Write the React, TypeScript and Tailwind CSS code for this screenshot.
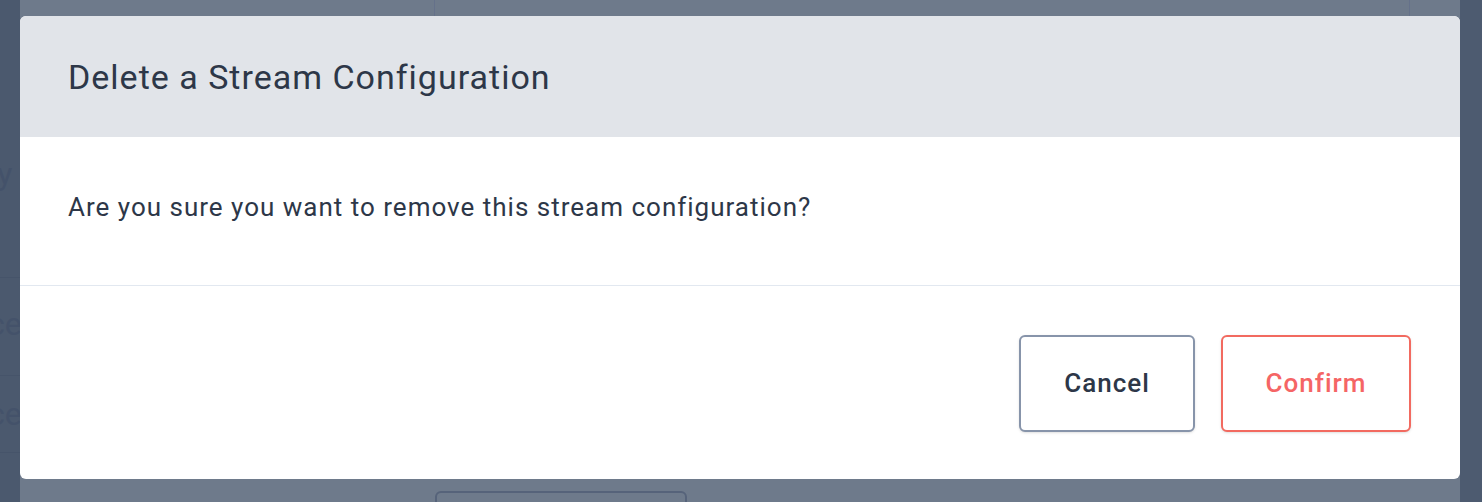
export default function App() {
  return (
    <div className="relative w-[1482px] h-[502px] overflow-hidden flex bg-[#4b596e] font-['Roboto',sans-serif]">
      {/* page underneath the overlay */}
      <div className="w-[20px] h-full relative bg-[#4b596e] overflow-hidden">
        <span className="absolute left-[-14px] top-[150px] text-[32px] text-[#44526a]">ry</span>
        <div className="absolute left-0 top-[277px] w-[20px] h-px bg-[#46546a]" />
        <span className="absolute left-[-12px] top-[300px] text-[32px] text-[#44526a]">ce</span>
        <div className="absolute left-0 top-[375px] w-[20px] h-px bg-[#46546a]" />
        <span className="absolute left-[-12px] top-[390px] text-[32px] text-[#44526a]">ce</span>
        <div className="absolute left-0 top-[452px] w-[20px] h-px bg-[#46546a]" />
      </div>
      <div className="relative flex-1 h-full bg-[#6e7a8b] flex flex-col">
        <div className="absolute left-[414px] top-0 h-[16px] w-px bg-[#65718a]" />
        <div className="absolute left-[1389px] top-0 h-[16px] w-px bg-[#65718a]" />
        <div className="absolute left-[415px] top-[491px] w-[252px] h-[30px] rounded-md border-2 border-[#56637a]" />

        {/* modal */}
        <div className="relative mt-[16px] h-[463px] bg-white rounded-md overflow-hidden flex flex-col">
          <div className="h-[121px] bg-[#e1e4e9] flex items-center px-[48px]">
            <h2 className="text-[34px] leading-[48px] tracking-[1px] text-[#2d3748]">Delete a Stream Configuration</h2>
          </div>
          <div className="h-[148px] px-[48px] pt-[52px]">
            <p className="text-[26px] leading-[36px] tracking-[1px] text-[#2d3748]">
              Are you sure you want to remove this stream configuration?
            </p>
          </div>
          <div className="h-px bg-[#e2e8f0]" />
          <div className="flex-1 flex justify-end items-start gap-[26px] pt-[49px] pr-[49px]">
            <button className="w-[176px] h-[97px] rounded-md border-2 border-[#8794aa] bg-white shadow-sm text-[26px] tracking-[1px] font-medium text-[#2d3748]">
              Cancel
            </button>
            <button className="w-[190px] h-[97px] rounded-md border-2 border-[#f26a60] bg-white shadow-sm text-[26px] tracking-[1px] font-medium text-[#f56565]">
              Confirm
            </button>
          </div>
        </div>
      </div>
      <div className="w-[22px] h-full bg-[#4d5b70]" />
    </div>
  );
}
